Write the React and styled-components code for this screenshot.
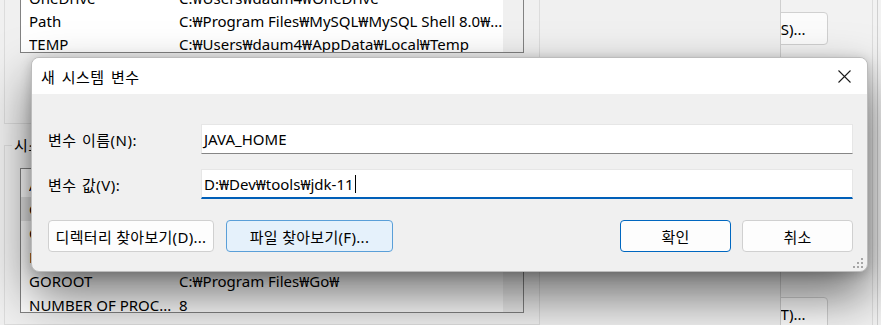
import React from "react";
import styled, { createGlobalStyle } from "styled-components";

const Global = createGlobalStyle`
  html, body { margin: 0; padding: 0; background: #f0f0f0; }
  body { font-family: "Noto Sans", "Noto Sans CJK KR", sans-serif; font-size: 15px; color: #000; }
  * { box-sizing: border-box; }
`;

const Stage = styled.div`
  position: relative;
  width: 881px;
  height: 325px;
  overflow: hidden;
  display: flex;
  background: #f0f0f0;
`;

const EnvWindow = styled.div`
  width: 781px;
  flex: none;
  border-right: 1px solid #cfcfcf;
  background: #f0f0f0;
  padding-left: 4px;
  display: flex;
  flex-direction: column;
  margin-top: -40px;
  height: 365px;
`;

const UserGroup = styled.div`
  width: 536px;
  height: 164px;
  border: 1px solid #dcdcdc;
  border-top: none;
  padding: 0 15px;
  flex: none;
`;

const SysGroup = styled.fieldset`
  width: 536px;
  margin: 11px 0 0 0;
  border: 1px solid #dcdcdc;
  padding: 0 15px;
  min-width: 0;
  flex: 1;
`;

const Legend = styled.legend`
  margin-left: -8px;
  padding: 0 2px;
  line-height: 20px;
  font-size: 15px;
  letter-spacing: 0.4px;
`;

const ListBox = styled.div`
  height: ${(p) => p.$h}px;
  margin-top: ${(p) => p.$mt || 0}px;
  border: 1px solid #828282;
  background: #fff;
  display: flex;
  overflow: hidden;
`;

const Rows = styled.div`
  flex: 1;
  padding-top: ${(p) => p.$pt}px;
  min-width: 0;
`;

const Scroll = styled.div`
  width: 20px;
  flex: none;
  background: #f0f0f0;
`;

const Row = styled.div`
  height: ${(p) => p.$h}px;
  display: flex;
  align-items: center;
  white-space: nowrap;
  background: ${(p) => (p.$sel ? "#e5e5e5" : "transparent")};
  padding-left: 8px;
`;

const Cell = styled.span`
  width: ${(p) => p.$w}px;
  flex: none;
  overflow: hidden;
`;

const SysPane = styled.div`
  flex: 1;
  overflow: hidden;
  display: flex;
  background: #f2f2f2;
`;

const SysInner = styled.div`
  width: 92px;
  flex: none;
  border-right: 1px solid #dcdcdc;
  display: flex;
  flex-direction: column;
  padding-top: 12px;
`;

const SysEdge = styled.div`
  width: 5px;
  flex: none;
  border-right: 1px solid #d0d0d0;
`;

const SettingBtn = styled.div`
  width: 110px;
  height: 33px;
  margin-left: -63px;
  margin-top: ${(p) => p.$mt || 0}px;
  flex: none;
  border: 1px solid #d0d0d0;
  border-radius: 4px;
  background: #fbfbfb;
  display: flex;
  align-items: center;
  justify-content: center;
  padding-left: 8px;
  white-space: nowrap;
`;

const Dialog = styled.div`
  position: absolute;
  left: 31px;
  top: 57px;
  width: 837px;
  height: 215px;
  border: 1px solid #bcbcbc;
  border-radius: 8px;
  overflow: hidden;
  background: #f0f0f0;
  box-shadow: 0 24px 50px rgba(0, 0, 0, 0.55), 0 2px 12px rgba(0, 0, 0, 0.2);
  display: flex;
  flex-direction: column;
`;

const TitleBar = styled.div`
  height: 36px;
  flex: none;
  background: #fff;
  display: flex;
  align-items: center;
  justify-content: space-between;
  padding: 0 16px 0 9px;
`;

const Title = styled.span`
  font-size: 15px;
  letter-spacing: 0.5px;
  word-spacing: 2px;
`;

const Body = styled.div`
  position: relative;
  flex: 1;
  padding: 30px 14px 18px 16px;
  display: flex;
  flex-direction: column;
`;

const Form = styled.div`
  display: grid;
  grid-template-columns: 153px 1fr;
  row-gap: 15px;
  align-items: center;
`;

const Label = styled.span`
  font-size: 15px;
  letter-spacing: 0.5px;
  word-spacing: 1px;
`;

const Field = styled.div`
  height: 30px;
  background: #fff;
  border: 1px solid #e6e6e6;
  border-bottom: ${(p) => (p.$focus ? "2px solid #005fb8" : "1px solid #868686")};
  display: flex;
  align-items: center;
  padding: 0 2px;
  white-space: nowrap;
`;

const Caret = styled.span`
  display: inline-block;
  width: 1px;
  height: 18px;
  background: #000;
  margin-left: 1px;
`;

const ButtonRow = styled.div`
  margin-top: 21px;
  display: flex;
  justify-content: space-between;
`;

const Group = styled.div`
  display: flex;
  gap: ${(p) => p.$gap}px;
`;

const Button = styled.div`
  width: ${(p) => p.$w}px;
  height: 32px;
  border-radius: 4px;
  display: flex;
  align-items: center;
  justify-content: center;
  font-size: 15px;
  letter-spacing: 0.3px;
  background: ${(p) => (p.$hover ? "#e5f1fb" : "#fdfdfd")};
  border: 1px solid
    ${(p) => (p.$primary ? "#0067c0" : p.$hover ? "#5a9fd8" : "#d0d0d0")};
`;

const Grip = styled.svg`
  position: absolute;
  right: 3px;
  bottom: 2px;
`;

const upperRows = [
  ["OneDrive", "C:₩Users₩daum4₩OneDrive"],
  ["Path", "C:₩Program Files₩MySQL₩MySQL Shell 8.0₩..."],
  ["TEMP", "C:₩Users₩daum4₩AppData₩Local₩Temp"],
];

const lowerRows = [
  ["ANDROID_HOME", "C:₩Android"],
  ["ChocolateyInstall", "C:₩ProgramData₩chocolatey"],
  ["ComSpec", "C:₩Windows₩system32₩cmd.exe"],
  ["DriverData", "C:₩Windows₩System32₩Drivers₩DriverData"],
  ["GOROOT", "C:₩Program Files₩Go₩"],
  ["NUMBER OF PROC...", "8"],
];

export default function App() {
  return (
    <>
      <Global />
      <Stage>
        <EnvWindow>
          <UserGroup>
            <ListBox $h={93}>
              <Rows $pt={25}>
                {upperRows.map(([k, v]) => (
                  <Row key={k} $h={23}>
                    <Cell $w={150}>{k}</Cell>
                    <Cell $w={330}>{v}</Cell>
                  </Row>
                ))}
              </Rows>
              <Scroll />
            </ListBox>
          </UserGroup>
          <SysGroup>
            <Legend>시스템 변수(S)</Legend>
            <ListBox $h={145} $mt={13}>
              <Rows $pt={4}>
                {lowerRows.map(([k, v], i) => (
                  <Row key={k} $h={24} $sel={i === 1}>
                    <Cell $w={150}>{k}</Cell>
                    <Cell $w={320}>{v}</Cell>
                  </Row>
                ))}
              </Rows>
              <Scroll />
            </ListBox>
          </SysGroup>
        </EnvWindow>
        <SysPane>
          <SysInner>
            <SettingBtn>설정(S)...</SettingBtn>
            <SettingBtn $mt={252}>설정(T)...</SettingBtn>
          </SysInner>
          <SysEdge />
        </SysPane>

        <Dialog>
          <TitleBar>
            <Title>새 시스템 변수</Title>
            <svg width="13" height="13" viewBox="0 0 13 13">
              <path d="M0.5 0.5 L12.5 12.5 M12.5 0.5 L0.5 12.5" stroke="#1b1b1b" strokeWidth="1.1" fill="none" />
            </svg>
          </TitleBar>
          <Body>
            <Form>
              <Label>변수 이름(N):</Label>
              <Field>JAVA_HOME</Field>
              <Label>변수 값(V):</Label>
              <Field $focus>
                D:₩Dev₩tools₩jdk-11
                <Caret />
              </Field>
            </Form>
            <ButtonRow>
              <Group $gap={12}>
                <Button $w={166}>디렉터리 찾아보기(D)...</Button>
                <Button $w={167} $hover>파일 찾아보기(F)...</Button>
              </Group>
              <Group $gap={11}>
                <Button $w={111} $primary>확인</Button>
                <Button $w={111}>취소</Button>
              </Group>
            </ButtonRow>
            <Grip width="12" height="12" viewBox="0 0 12 12">
              <g fill="#a6a6a6">
                <rect x="9" y="1" width="2" height="2" />
                <rect x="5" y="5" width="2" height="2" />
                <rect x="9" y="5" width="2" height="2" />
                <rect x="1" y="9" width="2" height="2" />
                <rect x="5" y="9" width="2" height="2" />
                <rect x="9" y="9" width="2" height="2" />
              </g>
            </Grip>
          </Body>
        </Dialog>
      </Stage>
    </>
  );
}
